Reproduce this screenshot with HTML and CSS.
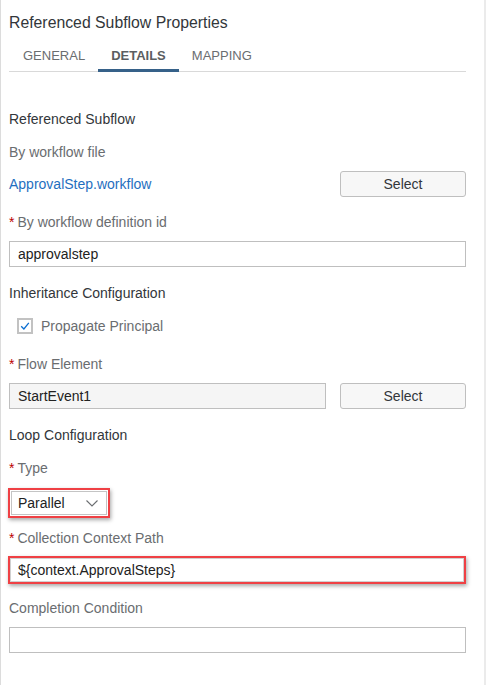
FILE: index.html
```html
<!DOCTYPE html>
<html lang="en">
<head>
<meta charset="utf-8">
<title>Referenced Subflow Properties</title>
<link rel="stylesheet" href="styles.css">
</head>
<body>
<div class="panel">
  <h1 class="title">Referenced Subflow Properties</h1>
  <div class="tabs">
    <div class="tab">GENERAL</div>
    <div class="tab active">DETAILS</div>
    <div class="tab">MAPPING</div>
  </div>

  <div class="heading first">Referenced Subflow</div>
  <div class="label sp13">By workflow file</div>
  <div class="row sp9">
    <a class="link" href="#">ApprovalStep.workflow</a>
    <button class="btn">Select</button>
  </div>

  <div class="label sp15"><span class="req">*</span>By workflow definition id</div>
  <div class="input sp9">approvalstep</div>

  <div class="heading sp16">Inheritance Configuration</div>
  <div class="check-row sp13">
    <span class="checkbox">
      <svg width="12" height="12" viewBox="0 0 12 12"><path d="M2.2 6.3 L4.9 9 L9.8 2.8" fill="none" stroke="#0a6ed1" stroke-width="1.3"/></svg>
    </span>
    <span class="check-label">Propagate Principal</span>
  </div>

  <div class="label sp18"><span class="req">*</span>Flow Element</div>
  <div class="row sp9">
    <div class="input readonly grow">StartEvent1</div>
    <button class="btn">Select</button>
  </div>

  <div class="heading sp16">Loop Configuration</div>
  <div class="label sp13"><span class="req">*</span>Type</div>
  <div class="highlight select-hl sp10">
    <div class="select">
      <span>Parallel</span>
      <svg class="chev" width="12" height="7" viewBox="0 0 12 7"><polyline points="0.5,0.5 6,6 11.5,0.5" fill="none" stroke="#6a6d70" stroke-width="1.1"/></svg>
    </div>
  </div>

  <div class="label sp10"><span class="req">*</span>Collection Context Path</div>
  <div class="highlight path-hl sp8">
    <div class="input inner">${context.ApprovalSteps}</div>
  </div>

  <div class="label sp14">Completion Condition</div>
  <div class="input sp9"></div>
</div>
</body>
</html>
```

FILE: styles.css
```css
html, body {
  margin: 0;
  padding: 0;
  background: #ffffff;
}

body {
  font-family: "Liberation Sans", Arial, sans-serif;
  font-size: 14px;
  color: #32363a;
}

.panel {
  box-sizing: border-box;
  width: 486px;
  height: 685px;
  border-left: 1px solid #dcdcdc;
  border-right: 2px solid #ebebeb;
  padding: 0 18px 0 8px;
  overflow: hidden;
}

.title {
  margin: 0;
  padding-top: 13px;
  font-size: 15.8px;
  font-weight: normal;
  line-height: 20px;
  color: #32363a;
}

.tabs {
  display: flex;
  margin-top: 7px;
  padding-left: 1px;
  border-bottom: 1px solid #d9d9d9;
}

.tab {
  padding: 2px 13px 0;
  line-height: 27px;
  font-size: 13px;
  color: #6a6d70;
  border-bottom: 3px solid transparent;
  margin-bottom: -1px;
}

.tab.active {
  font-weight: bold;
  color: #5b5e61;
  border-bottom-color: #366189;
}

.heading, .label {
  line-height: 20px;
}

.heading {
  color: #32363a;
}

.heading.first {
  margin-top: 37px;
}

.label {
  color: #6a6d70;
}

.req {
  color: #bb0000;
  margin-right: 3px;
}

.sp8 { margin-top: 8px; }
.sp9 { margin-top: 9px; }
.sp10 { margin-top: 10px; }
.sp13 { margin-top: 13px; }
.sp14 { margin-top: 14px; }
.sp15 { margin-top: 15px; }
.sp16 { margin-top: 16px; }
.sp18 { margin-top: 18px; }

.row {
  display: flex;
  align-items: center;
  justify-content: space-between;
  gap: 14px;
}

.link {
  color: #1f6fc0;
  text-decoration: none;
}

.btn {
  box-sizing: border-box;
  width: 126px;
  height: 26px;
  flex: none;
  background: #f7f7f7;
  border: 1px solid #bfbfbf;
  border-radius: 3px;
  font-family: "Liberation Sans", Arial, sans-serif;
  font-size: 14px;
  color: #32363a;
  padding: 0;
}

.input {
  box-sizing: border-box;
  height: 26px;
  border: 1px solid #bfbfbf;
  background: #ffffff;
  padding: 0 8px;
  line-height: 24px;
  color: #222222;
}

.input.readonly {
  background: #f5f5f5;
}

.grow {
  flex: 1;
}

.check-row {
  display: flex;
  align-items: center;
  height: 20px;
  padding-left: 8px;
}

.checkbox {
  box-sizing: border-box;
  width: 16px;
  height: 16px;
  border: 2px solid #c2c2c2;
  display: flex;
  align-items: center;
  justify-content: center;
  background: #ffffff;
}

.check-label {
  margin-left: 8px;
  color: #6a6d70;
}

.highlight {
  box-sizing: border-box;
  margin-left: -1px;
  border: 2px solid #ef4044;
  box-shadow: 1px 2px 4px rgba(0, 0, 0, 0.35);
}

.select-hl {
  width: 102px;
  padding: 1px;
}

.select {
  box-sizing: border-box;
  height: 24px;
  border: 1px solid #c4c4c4;
  display: flex;
  align-items: center;
  justify-content: space-between;
  padding: 0 8px 0 6px;
  color: #222222;
}

.chev {
  display: block;
}

.path-hl {
  width: 458px;
}

.input.inner {
  height: 24px;
  line-height: 22px;
  border-color: #d0d0d0;
  padding-left: 7px;
}
```
